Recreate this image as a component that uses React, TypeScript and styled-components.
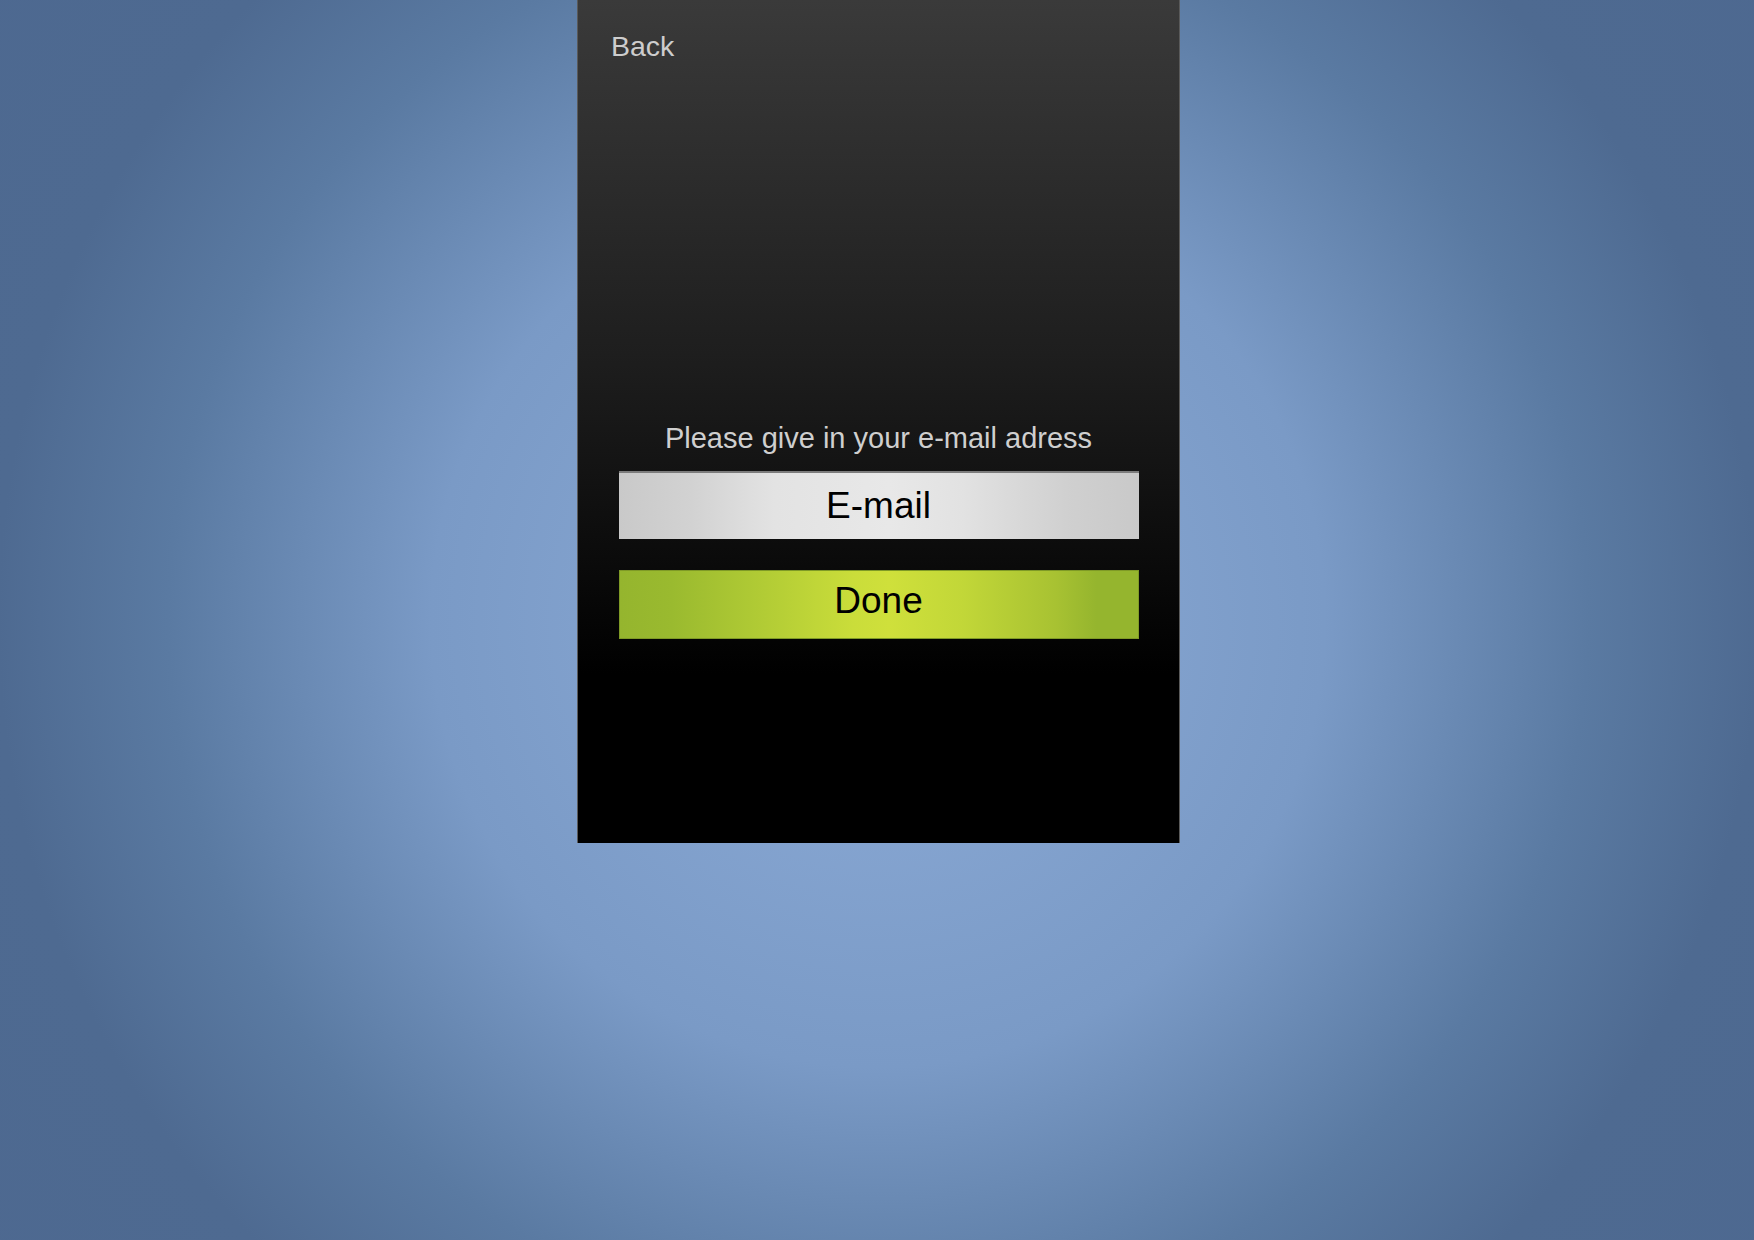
import React from "react";
import styled, { createGlobalStyle } from "styled-components";

const GlobalStyle = createGlobalStyle`
  html, body {
    margin: 0;
    padding: 0;
  }
  body {
    width: 1754px;
    height: 1240px;
    overflow: hidden;
    font-family: "Liberation Sans", Arial, sans-serif;
  }
`;

const Page = styled.div`
  width: 1754px;
  height: 1240px;
  box-sizing: border-box;
  padding-left: 3px;
  display: flex;
  justify-content: center;
  align-items: flex-start;
  background: radial-gradient(
    circle at 878px 620px,
    #8dacd8 0px,
    #7a9ac6 447px,
    #5a7aa2 710px,
    #4e6a91 880px,
    #4d6890 1200px
  );
`;

const Screen = styled.div`
  width: 603px;
  height: 843px;
  box-sizing: border-box;
  display: flex;
  flex-direction: column;
  padding: 29px 0 0;
  border-left: 1px solid #5a5a5a;
  border-right: 1px solid #5a5a5a;
  background: linear-gradient(to bottom, #3a3a3a 0%, #1e1e1e 42%, #000 80%, #000 100%);
`;

const Header = styled.div`
  padding-left: 33px;
`;

const BackLink = styled.a`
  font-size: 28.5px;
  line-height: 34px;
  color: #cdcdcd;
  cursor: pointer;
  text-decoration: none;
`;

const Form = styled.form`
  width: 520px;
  margin: 358px auto 0;
  display: flex;
  flex-direction: column;
`;

const Prompt = styled.div`
  font-size: 29px;
  line-height: 34px;
  color: #cfcfcf;
  text-align: center;
  margin-bottom: 16px;
`;

const EmailInput = styled.input`
  height: 68px;
  box-sizing: border-box;
  border: none;
  border-top: 2px solid #7c7c7c;
  outline: none;
  padding: 0;
  font-family: "Liberation Sans", Arial, sans-serif;
  font-size: 37px;
  text-align: center;
  color: #000;
  background: linear-gradient(
    to right,
    #c9c9c9 0%,
    #d2d2d2 14%,
    #e3e3e3 30%,
    #e8e8e8 52%,
    #e2e2e2 66%,
    #d0d0d0 86%,
    #c9c9c9 100%
  );

  &::placeholder {
    color: #000;
    opacity: 1;
  }
`;

const DoneButton = styled.button`
  margin-top: 31px;
  height: 69px;
  border: 1px solid #7f9a26;
  padding: 0 0 8px;
  font-family: "Liberation Sans", Arial, sans-serif;
  font-size: 37px;
  color: #000;
  cursor: pointer;
  background: linear-gradient(
    to right,
    #95b52e 0%,
    #9aba2f 10%,
    #b2cc35 28%,
    #cadd3a 45%,
    #cfe03b 52%,
    #c2d738 66%,
    #a8c232 84%,
    #95b52e 92%,
    #95b52e 100%
  );
`;

export default function App() {
  return (
    <>
      <GlobalStyle />
      <Page>
        <Screen>
          <Header>
            <BackLink>Back</BackLink>
          </Header>
          <Form onSubmit={(e) => e.preventDefault()}>
            <Prompt>Please give in your e-mail adress</Prompt>
            <EmailInput type="email" placeholder="E-mail" />
            <DoneButton type="submit">Done</DoneButton>
          </Form>
        </Screen>
      </Page>
    </>
  );
}
